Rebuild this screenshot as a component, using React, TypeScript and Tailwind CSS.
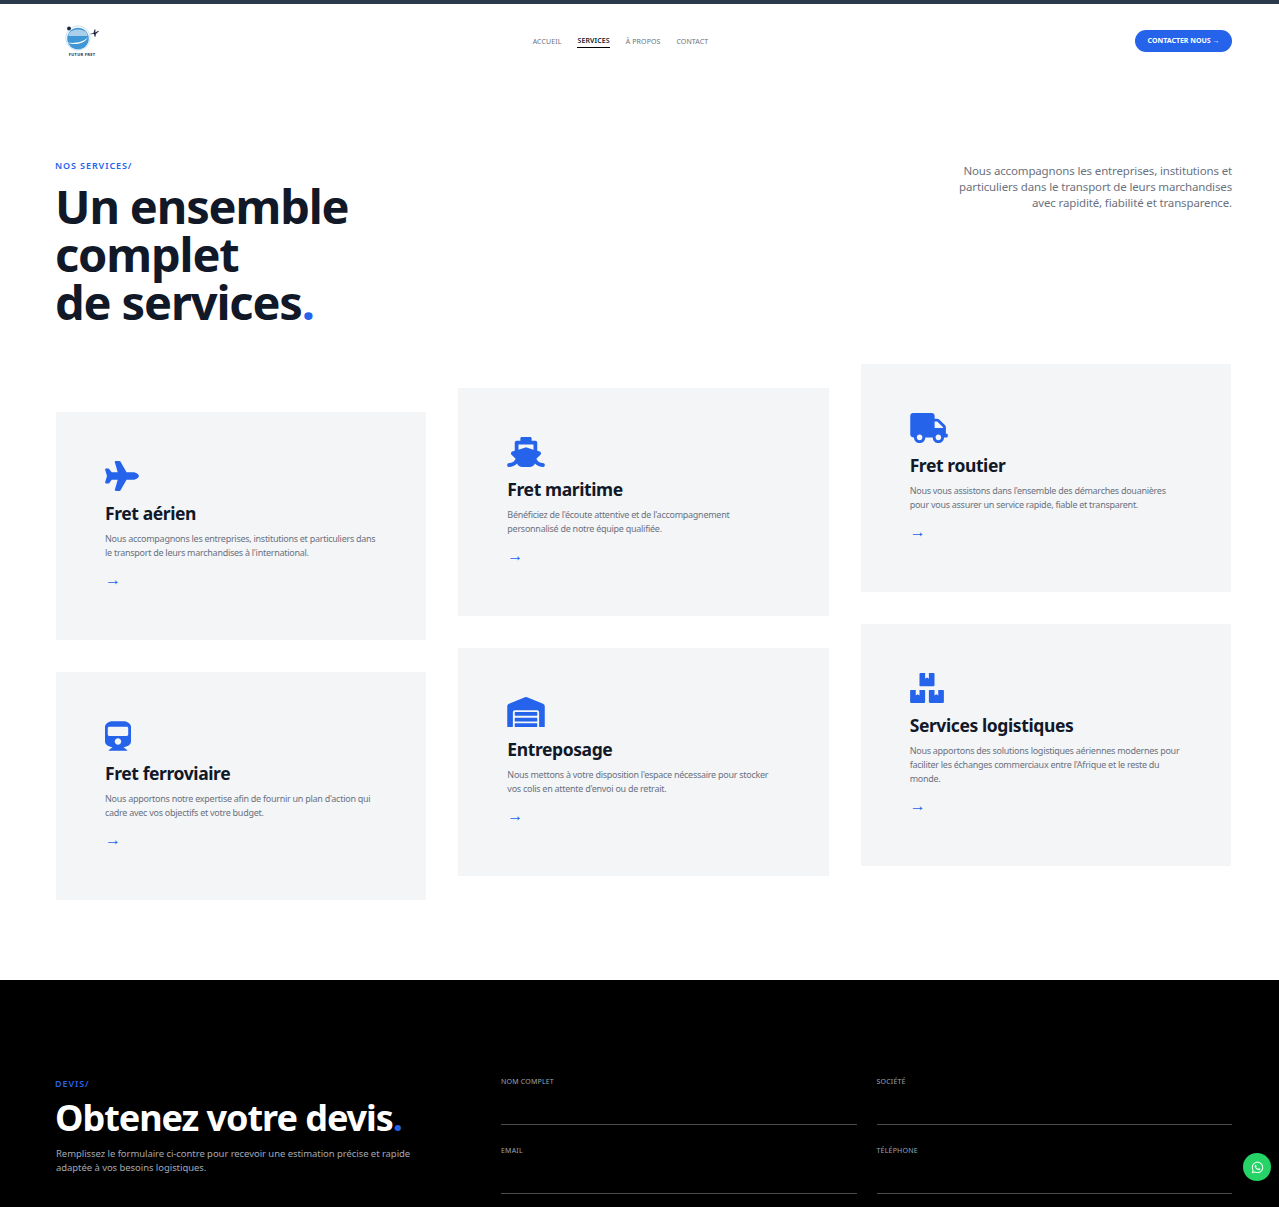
import { FaPlane, FaShip, FaTruck, FaTrain, FaWarehouse, FaBoxes, FaWhatsapp } from "react-icons/fa";
import type { IconType } from "react-icons";

interface Service {
  title: string;
  text: string;
  icon: IconType;
  iconSize: string;
}

const columns: { offset: string; items: Service[] }[] = [
  {
    offset: "mt-12",
    items: [
      {
        title: "Fret aérien",
        text: "Nous accompagnons les entreprises, institutions et particuliers dans le transport de leurs marchandises à l'international.",
        icon: FaPlane,
        iconSize: "w-[34px]",
      },
      {
        title: "Fret ferroviaire",
        text: "Nous apportons notre expertise afin de fournir un plan d'action qui cadre avec vos objectifs et votre budget.",
        icon: FaTrain,
        iconSize: "w-[26px]",
      },
    ],
  },
  {
    offset: "mt-6",
    items: [
      {
        title: "Fret maritime",
        text: "Bénéficiez de l'écoute attentive et de l'accompagnement personnalisé de notre équipe qualifiée.",
        icon: FaShip,
        iconSize: "w-[38px]",
      },
      {
        title: "Entreposage",
        text: "Nous mettons à votre disposition l'espace nécessaire pour stocker vos colis en attente d'envoi ou de retrait.",
        icon: FaWarehouse,
        iconSize: "w-[38px]",
      },
    ],
  },
  {
    offset: "mt-0",
    items: [
      {
        title: "Fret routier",
        text: "Nous vous assistons dans l'ensemble des démarches douanières pour vous assurer un service rapide, fiable et transparent.",
        icon: FaTruck,
        iconSize: "w-[38px]",
      },
      {
        title: "Services logistiques",
        text: "Nous apportons des solutions logistiques aériennes modernes pour faciliter les échanges commerciaux entre l'Afrique et le reste du monde.",
        icon: FaBoxes,
        iconSize: "w-[34px]",
      },
    ],
  },
];

const navLinks = ["ACCUEIL", "SERVICES", "À PROPOS", "CONTACT"];

const Logo = () => (
  <div className="flex w-[38px] flex-col items-center">
    <svg width="36" height="26" viewBox="0 0 36 26">
      <circle cx="14" cy="13" r="12.2" fill="none" stroke="#bcd9ee" strokeWidth="0.8" />
      <circle cx="14" cy="13.5" r="10.8" fill="#3f97d6" />
      <path d="M4.5 9c3-6 16-6 19 0v2h-19z" fill="#a9cfec" />
      <path d="M2 17c6 2 17 1 22-5-3 7-14 9-22 5z" fill="#ffffff" />
      <circle cx="5" cy="3.5" r="2" fill="#1f2a44" />
      <path d="M26 9l3.5-1 1-3.4 1 0-.2 2.8 3-1.6.6.5-3 2.6-.5 2.9-.8 0-.6-2.7-4 .2z" fill="#1f2a44" />
    </svg>
    <span className="mt-px text-[4px] leading-[6px] font-bold tracking-[0.3px] text-[#1f2a44]">FUTUR FRET</span>
  </div>
);

const ServiceCard = ({ service }: { service: Service }) => {
  const Icon = service.icon;
  return (
    <div className="bg-[#f3f5f7] px-[49px] pt-[49px] pb-[49px]">
      <Icon className={`h-[30px] ${service.iconSize} text-[#2563eb]`} />
      <h3 className="mt-[8px] text-[17.5px] leading-[28px] font-bold tracking-[-0.4px] text-[#111827]">
        {service.title}
      </h3>
      <p className="mt-[5px] max-w-[272px] text-[9px] leading-[14px] tracking-[-0.27px] text-[#6b7280]">
        {service.text}
      </p>
      <div className="mt-[7px] text-[16px] leading-[24px] text-[#2563eb]">→</div>
    </div>
  );
};

const Field = ({ label }: { label: string }) => (
  <div>
    <div className="text-[7px] leading-[10px] tracking-[0.2px] text-[#9ca3af]">{label}</div>
    <div className="mt-[37px] h-px bg-[#4b4b4b]" />
  </div>
);

export default function App() {
  return (
    <div className="h-[1207px] overflow-hidden bg-white font-['Noto_Sans','Open_Sans',sans-serif]">
      <div className="h-1 bg-[#2b3a4a]" />

      <header className="flex h-[75px] items-start justify-between pt-[21px] pr-[47px] pl-[47px]">
        <div className="ml-4">
          <Logo />
        </div>
        <nav className="mt-[12px] ml-[5px] flex items-start gap-4 tracking-[0.1px]">
          {navLinks.map((link) =>
            link === "SERVICES" ? (
              <span key={link} className="-mt-px border-b border-black pb-[1px] text-[7px] leading-[10px] font-semibold text-[#111827]">
                {link}
              </span>
            ) : (
              <span key={link} className="text-[7px] leading-[10px] text-[#6b7280]">
                {link}
              </span>
            ),
          )}
        </nav>
        <button className="mt-[5px] h-[22px] w-[97px] rounded-full bg-[#2563eb] text-[7px] font-bold text-white">
          CONTACTER NOUS →
        </button>
      </header>

      <main className="pr-[47px] pl-14">
        <section className="mt-[81px] flex justify-between">
          <div>
            <div className="-ml-px text-[9px] leading-[12px] font-semibold tracking-[0.9px] text-[#2563eb]">NOS SERVICES/</div>
            <h1 className="mt-[10px] -ml-px text-[47px] leading-[48px] font-bold tracking-[-1.15px] text-[#111827]">
              Un ensemble
              <br />
              complet
              <br />
              de services<span className="text-[#2563eb]">.</span>
            </h1>
          </div>
          <p className="mt-[3px] w-[280px] text-right text-[11.5px] leading-[16px] tracking-[-0.15px] text-[#6b7280]">
            Nous accompagnons les entreprises, institutions et particuliers dans le transport de leurs marchandises avec
            rapidité, fiabilité et transparence.
          </p>
        </section>

        <section className="mt-[38px] mr-px grid h-[616px] grid-cols-3 items-start gap-8">
          {columns.map((col) => (
            <div key={col.items[0].title} className={`${col.offset} flex flex-col gap-8`}>
              {col.items.map((service) => (
                <ServiceCard key={service.title} service={service} />
              ))}
            </div>
          ))}
        </section>
      </main>

      <section className="grid grid-cols-[445px_1fr] bg-black pt-[98px] pr-[47px] pb-[60px] pl-14">
        <div>
          <div className="-ml-px text-[9px] leading-[12px] font-semibold tracking-[0.9px] text-[#2563eb]">DEVIS/</div>
          <h2 className="mt-[8px] -ml-px text-[36px] leading-[40px] font-bold tracking-[-1.05px] text-white">
            Obtenez votre devis<span className="text-[#2563eb]">.</span>
          </h2>
          <p className="mt-[9px] w-[370px] text-[9.5px] leading-[14px] tracking-[-0.06px] text-[#a3a9b3]">
            Remplissez le formulaire ci-contre pour recevoir une estimation précise et rapide adaptée à vos besoins
            logistiques.
          </p>
        </div>
        <div className="-mt-px grid grid-cols-2 gap-x-5 gap-y-[21px]">
          <Field label="NOM COMPLET" />
          <Field label="SOCIÉTÉ" />
          <Field label="EMAIL" />
          <Field label="TÉLÉPHONE" />
        </div>
      </section>

      <div className="fixed right-2 bottom-[26px] flex h-7 w-7 items-center justify-center rounded-full bg-[#25d366] text-white">
        <FaWhatsapp className="h-[13px] w-[13px]" />
      </div>
    </div>
  );
}
